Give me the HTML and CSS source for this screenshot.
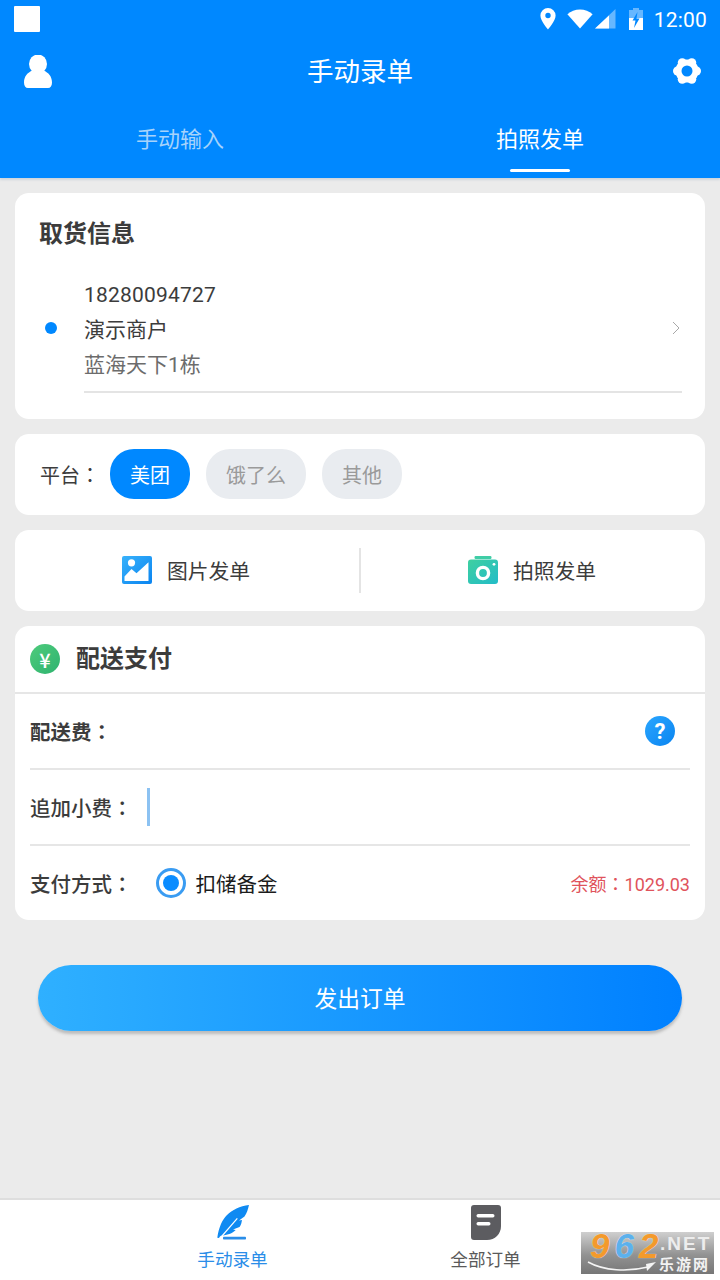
FILE: index.html
```html
<!DOCTYPE html>
<html lang="zh-CN">
<head>
<meta charset="utf-8">
<title>手动录单</title>
<link rel="stylesheet" href="styles.css">
</head>
<body>
<div class="page">
  <header class="head">
    <div class="status">
      <span class="notif"></span>
      <div class="status-icons">
        <svg class="ic-pin" viewBox="0 0 16 22"><path fill="#fff" fill-rule="evenodd" d="M8 0a7.600 7.600 0 0 0-7.600 7.600C.4 13 8 21.500 8 21.500S15.600 13 15.600 7.600A7.600 7.600 0 0 0 8 0zm0 10.200a2.700 2.700 0 1 1 0-5.400 2.700 2.700 0 0 1 0 5.400z"/></svg>
        <svg class="ic-wifi" viewBox="0 0 26 20"><path fill="#fff" d="M13 19.500 .4 5.200C3.800 2.200 8.200.4 13 .4s9.200 1.800 12.600 4.800z"/></svg>
        <svg class="ic-signal" viewBox="0 0 21 20"><path fill="#fff" fill-opacity=".4" d="M20.500 0v19.500H0z"/><path fill="#fff" d="M14 6.500v13H0z"/></svg>
        <svg class="ic-batt" viewBox="0 0 14 22"><path fill="#fff" fill-opacity=".4" d="M4 0h6v2h4v20H0V2h4z"/><path fill="#fff" d="M0 10h14v12H0z"/><path fill="#0088ff" d="M8.500 4 3.500 12.500h3L5 20 10.500 10.500h-3z"/></svg>
        <span class="clock">12:00</span>
      </div>
    </div>
    <div class="appbar">
      <svg class="ic-user" viewBox="0 0 28 33"><ellipse cx="14" cy="9" rx="9" ry="9.500" fill="#fff"/><path fill="#fff" d="M8.500 15.500C3.500 17.500 0 21.500 0 27.500 0 31 1.500 33 4 33h20c2.500 0 4-2 4-5.500 0-6-3.500-10-8.500-12-1.500 1.500-3.500 2.500-5.500 2.500s-4-1-5.500-2.500z"/></svg>
      <h1 class="title">手动录单</h1>
      <svg class="ic-gear" viewBox="0 0 28 28">
        <g fill="#fff">
          <circle cx="23.500" cy="14" r="4.500"/><circle cx="4.500" cy="14" r="4.500"/>
          <circle cx="18.750" cy="5.770" r="4.500"/><circle cx="9.250" cy="5.770" r="4.500"/>
          <circle cx="18.750" cy="22.230" r="4.500"/><circle cx="9.250" cy="22.230" r="4.500"/>
          <circle cx="14" cy="14" r="11.600"/>
        </g>
        <circle cx="14" cy="14" r="5.500" fill="#0088ff"/>
      </svg>
    </div>
    <nav class="tabs">
      <span class="tab">手动输入</span>
      <span class="tab tab-on">拍照发单</span>
    </nav>
  </header>

  <main class="main">
    <section class="card pickup">
      <h2 class="card-title">取货信息</h2>
      <div class="pickup-row">
        <span class="dot"></span>
        <div class="pickup-info">
          <p class="pickup-line phone">18280094727</p>
          <p class="pickup-line">演示商户</p>
          <p class="pickup-line muted">蓝海天下1栋</p>
          <svg class="chev" viewBox="0 0 8 14"><path fill="none" stroke="#a8a8a8" d="M1 1l6 6-6 6"/></svg>
        </div>
      </div>
    </section>

    <section class="card platform">
      <span class="plat-label">平台<span class="colon" lang="zh-TW">：</span></span>
      <span class="chip chip-on">美团</span>
      <span class="chip chip-wide">饿了么</span>
      <span class="chip">其他</span>
    </section>

    <section class="card actions">
      <div class="action">
        <svg class="ic-photo" viewBox="0 0 30 28">
          <defs><linearGradient id="gp" x1="0" y1="0" x2="1" y2="1"><stop offset="0" stop-color="#38b2fb"/><stop offset="1" stop-color="#0a84f0"/></linearGradient></defs>
          <rect width="30" height="28" rx="2" fill="url(#gp)"/>
          <circle cx="9.500" cy="6.800" r="3.600" fill="#fff"/>
          <path fill="#fff" d="M2.500 25v-4.500L9.500 13l5 4.300L26.500 6.300V25z"/>
        </svg>
        <span class="action-text">图片发单</span>
      </div>
      <i class="vline"></i>
      <div class="action">
        <svg class="ic-cam" viewBox="0 0 30 28">
          <defs><linearGradient id="gc" x1="0" y1="0" x2="1" y2="1"><stop offset="0" stop-color="#3fd0a0"/><stop offset="1" stop-color="#22bcc8"/></linearGradient></defs>
          <rect x="6.500" y="0" width="17" height="3" rx="1.200" fill="#3fcda6"/>
          <rect y="3.500" width="30" height="24.500" rx="3" fill="url(#gc)"/>
          <circle cx="15" cy="17" r="5.600" fill="none" stroke="#fff" stroke-width="3.400"/>
          <circle cx="26" cy="8.300" r="1.400" fill="#fff"/>
        </svg>
        <span class="action-text">拍照发单</span>
      </div>
    </section>

    <section class="card pay">
      <div class="pay-head">
        <span class="yen">¥</span>
        <h2 class="pay-title">配送支付</h2>
      </div>
      <div class="pay-row pay-line">
        <span class="pay-label pay-strong">配送费<span class="colon" lang="zh-TW">：</span></span>
        <span class="help">?</span>
      </div>
      <div class="pay-row pay-line">
        <span class="pay-label">追加小费<span class="colon" lang="zh-TW">：</span></span>
        <i class="caret"></i>
      </div>
      <div class="pay-row pay-last">
        <span class="pay-label">支付方式<span class="colon" lang="zh-TW">：</span></span>
        <span class="radio"></span>
        <span class="method">扣储备金</span>
        <span class="balance">余额<span class="colon" lang="zh-TW">：</span>1029.03</span>
      </div>
    </section>

    <button class="submit" type="button">发出订单</button>
  </main>

  <footer class="bottom">
    <div class="bt bt-on">
      <svg class="ic-feather" viewBox="0 0 33 35">
        <path fill="#0f8af2" d="M33 0C24 1 16 5 11 10 6 15 3 22 1.300 32.700L3 33c1-2 2-2.500 3.300-2.500 5.700-.5 10.700-2.500 13.400-5.500l-2.700-.5 6.500-2.500c1.500-2 2-4 2.500-7l-3 .5 5.500-4C31 8 32 4 33 0z"/>
        <path fill="none" stroke="#fff" stroke-width="1.200" d="M6 31 21.300 13.300"/>
        <rect x="7" y="31.800" width="23" height="2.700" rx=".8" fill="#2a8de8"/>
      </svg>
      <span class="bt-label">手动录单</span>
    </div>
    <div class="bt">
      <svg class="ic-doc" viewBox="0 0 30 35">
        <path fill="#5c5c60" d="M3 0h24a3 3 0 0 1 3 3v18c0 8-6 14-14 14H3a3 3 0 0 1-3-3V3a3 3 0 0 1 3-3z"/>
        <rect x="5.500" y="9" width="18" height="3.500" rx="1.700" fill="#fff"/>
        <rect x="5.500" y="17" width="14" height="3.500" rx="1.700" fill="#fff"/>
      </svg>
      <span class="bt-label">全部订单</span>
    </div>
  </footer>

  <aside class="mark">
    <div class="mark-num"><b class="n-o">9</b><b class="n-b">6</b><b class="n-o">2</b></div>
    <div class="mark-side">
      <span class="mark-net">.NET</span>
      <span class="mark-low">乐游网</span>
    </div>
    <svg class="mark-swoosh" viewBox="0 0 70 12"><path fill="none" stroke="#f4f4f4" stroke-width="1.500" d="M1 1c16 9 40 10 60 5"/><path fill="#f4f4f4" d="M69 1l-9 9-1-7z"/></svg>
  </aside>
</div>
</body>
</html>
```
FILE: styles.css
```css
* { box-sizing: border-box; margin: 0; padding: 0; }
html, body { width: 720px; height: 1280px; overflow: hidden; }
body { font-family: Roboto, "Noto Sans CJK SC", sans-serif; background: #ebebeb; color: #3c3c3c; }

.page { position: relative; width: 720px; height: 1280px; display: flex; flex-direction: column; }
.colon { font-family: "Noto Sans CJK TC", sans-serif; }

.head { height: 178px; background: #0088ff; box-shadow: 0 2px 2px #cfd6dc; flex: none; color: #fff; display: flex; flex-direction: column; }

.status { height: 40px; padding: 6px 13px 0 14px; display: flex; justify-content: space-between; align-items: flex-start; }
.notif { width: 26px; height: 26px; background: #fff; border-radius: 1px; }
.status-icons { display: flex; align-items: center; height: 26px; }
.ic-pin { width: 16px; height: 22px; margin-right: 11px; }
.ic-wifi { width: 26px; height: 20px; margin-right: 2px; }
.ic-signal { width: 21px; height: 20px; margin-right: 13px; }
.ic-batt { width: 14px; height: 22px; margin-right: 11px; }
.clock { font-size: 21px; line-height: 26px; letter-spacing: .2px; margin-top: 2px; }

.appbar { height: 60px; padding: 0 19px 0 24px; display: flex; align-items: center; justify-content: space-between; }
.ic-user { width: 28px; height: 33px; margin-top: 3px; }
.ic-gear { width: 28px; height: 28px; margin-top: 1px; }
.title { font-size: 26.500px; font-weight: 400; line-height: 36px; position: absolute; left: 0; right: 0; top: 54px; text-align: center; }

.tabs { flex: 1; display: grid; grid-template-columns: 1fr 1fr; text-align: center; }
.tab { font-size: 22px; line-height: 30px; padding-top: 25px; color: #a6d3fb; position: relative; }
.tab-on { color: #fff; }
.tab-on::after { content: ""; position: absolute; left: 150px; bottom: 6px; width: 60px; height: 3px; background: #fff; border-radius: 2px; }

.main { flex: 1; padding: 15px 15px 0; display: flex; flex-direction: column; gap: 15px; }
.card { background: #fff; border-radius: 14px; }

.pickup { height: 226px; padding: 25px 23px 0 24px; }
.card-title { font-size: 24px; line-height: 32px; font-weight: 700; color: #3c3c3c; }
.pickup-row { display: flex; align-items: center; margin-top: 28px; }
.dot { width: 12px; height: 12px; border-radius: 50%; background: #0088ff; margin: 0 0 16px 6px; flex: none; }
.pickup-info { position: relative; flex: 1; margin-left: 27px; padding-bottom: 8px; border-bottom: 2px solid #e4e4e4; }
.pickup-line { font-size: 21px; line-height: 35px; color: #3c3c3c; }
.phone { letter-spacing: .2px; }
.muted { color: #6c6c6c; }
.chev { position: absolute; right: 2px; top: 43px; width: 8px; height: 14px; }

.platform { height: 81px; padding: 0 25px 1px; display: flex; align-items: center; }
.plat-label { font-size: 20px; width: 70px; color: #3c3c3c; white-space: nowrap; }
.chip { width: 80px; height: 50px; border-radius: 24px; background: #e9ecf0; color: #9a9a9a; font-size: 20px; display: flex; align-items: center; justify-content: center; margin-right: 16px; }
.chip-wide { width: 100px; }
.chip-on { background: #0088ff; color: #fff; }

.actions { height: 81px; padding-bottom: 1px; display: flex; align-items: center; }
.action { flex: 1; display: flex; align-items: center; justify-content: center; gap: 15px; padding-right: 2px; }
.action-text { font-size: 20.800px; color: #3c3c3c; }
.vline { width: 2px; height: 45px; background: #e4e4e4; flex: none; }
.ic-photo { width: 30px; height: 28px; }
.ic-cam { width: 30px; height: 28px; }

.pay { height: 294px; }
.pay-head { height: 68px; padding: 0 15px; display: flex; align-items: center; gap: 16px; border-bottom: 2px solid #e6e6e6; }
.yen { width: 30px; height: 30px; border-radius: 50%; background: linear-gradient(135deg, #4ecb7c, #2fb36f); color: #fff; font-family: "Noto Sans CJK SC", sans-serif; font-size: 20px; font-weight: 500; display: flex; align-items: center; justify-content: center; }
.pay-title { font-size: 24px; font-weight: 700; line-height: 32px; color: #3c3c3c; }
.pay-row { height: 76px; margin: 0 15px; display: flex; align-items: center; }
.pay-last { height: 74px; }
.pay-line { border-bottom: 2px solid #e6e6e6; }
.pay-label { font-size: 20.500px; font-weight: 500; color: #3c3c3c; white-space: nowrap; }
.pay-strong { font-weight: 700; }
.help { margin-left: auto; margin-right: 15px; width: 30px; height: 30px; border-radius: 50%; background: linear-gradient(135deg, #2aa6ff, #0a84f0); color: #fff; font-size: 22px; font-weight: 700; display: flex; align-items: center; justify-content: center; }
.caret { width: 3px; height: 38px; margin-left: 14px; background: #8cc2f2; }
.radio { width: 30px; height: 30px; border-radius: 50%; border: 3px solid #3a9cf2; margin-left: 23px; position: relative; background: #fff; }
.radio::after { content: ""; position: absolute; left: 4px; top: 4px; width: 16px; height: 16px; border-radius: 50%; background: #0a8cff; }
.method { font-size: 20.500px; color: #1c1c1c; margin-left: 10px; }
.balance { margin-left: auto; font-size: 18px; color: #e0535c; }

.submit { display: block; width: 644px; height: 66px; margin: 30px 0 0 23px; padding-bottom: 2px; border: 0; border-radius: 33px; background: linear-gradient(90deg, #2fb0ff, #0080ff); box-shadow: 0 3px 3px #bcbcbc; color: #fff; font: 400 22.800px Roboto, "Noto Sans CJK SC", sans-serif; }

.bottom { flex: none; height: 82px; background: #fff; border-top: 2px solid #dedede; display: flex; padding-left: 106px; }
.bt { width: 253px; display: flex; flex-direction: column; align-items: center; padding-top: 5px; }
.bt-label { font-size: 17.600px; line-height: 24px; margin-top: 8px; color: #5a5a5a; }
.bt-on .bt-label { color: #2a8de8; }
.ic-feather { width: 33px; height: 35px; }
.ic-doc { width: 30px; height: 35px; margin-left: 1px; }

.mark { position: absolute; left: 581px; top: 1232px; width: 133px; height: 42px; display: flex; background: linear-gradient(180deg, #cfcfcf, #929292 55%, #767676); font-family: "Liberation Sans", "Noto Sans CJK SC", sans-serif; }
.mark-num { width: 79px; padding-left: 9px; font-size: 35px; line-height: 27px; height: 27px; font-style: italic; letter-spacing: 5px; text-shadow: 0 0 1px #fff; white-space: nowrap; }
.n-o { color: #f39a2c; }
.n-b { color: #5cb1ec; }
.mark-side { display: flex; flex-direction: column; }
.mark-net { font-size: 19px; line-height: 24px; height: 24px; font-weight: 700; color: #ededed; letter-spacing: 2px; white-space: nowrap; }
.mark-low { font-size: 15px; line-height: 18px; font-weight: 700; color: #f2f2f2; letter-spacing: 2px; white-space: nowrap; margin-left: -1px; }
.mark-swoosh { position: absolute; left: 6px; top: 29px; width: 70px; height: 12px; }
```
